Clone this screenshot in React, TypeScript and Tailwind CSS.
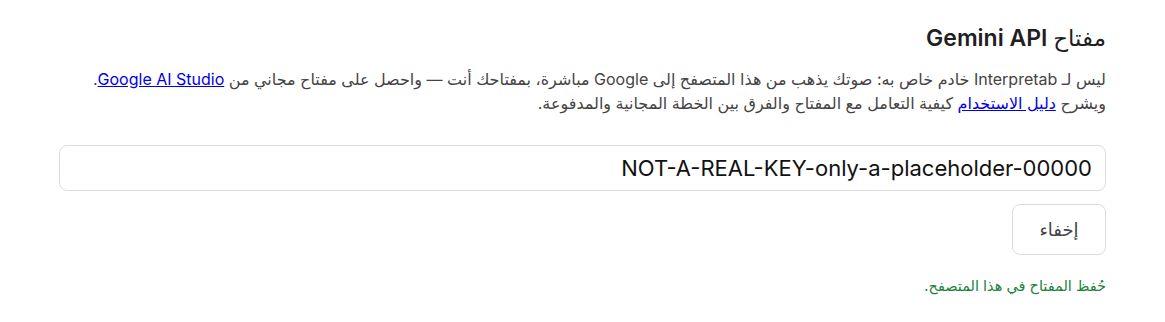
export default function App() {
  return (
    <div
      dir="rtl"
      className="min-h-screen bg-white px-[59px] pt-[24px] font-['Inter','DejaVu_Sans',sans-serif] text-[#222]"
    >
      <h2 className="text-[23px] font-semibold leading-[28px] text-[#1f1f1f]">
        <span className="font-['DejaVu_Sans'] font-normal">مفتاح</span> Gemini API
      </h2>
      <p className="mt-[15px] text-[16px] leading-[24px] text-[#444]">
        ليس لـ Interpretab خادم خاص به: صوتك يذهب من هذا المتصفح إلى Google مباشرة، بمفتاحك أنت — واحصل على مفتاح مجاني من{" "}
        <a href="#" className="text-[#0000ee] underline">Google AI Studio</a>.
        <br />
        ويشرح <a href="#" className="text-[#0000ee] underline">دليل الاستخدام</a> كيفية التعامل مع المفتاح والفرق بين الخطة المجانية والمدفوعة.
      </p>
      <input
        type="text"
        defaultValue="NOT-A-REAL-KEY-only-a-placeholder-00000"
        className="mt-[30px] block h-[46px] w-full rounded-[8px] border border-[#dcdcdc] bg-white px-[13px] text-[22px] text-[#111] outline-none"
      />
      <button className="mt-[13px] block h-[51px] w-[94px] rounded-[8px] border border-[#dcdcdc] bg-white text-[18px] text-[#444]">
        إخفاء
      </button>
      <p className="mt-[21px] text-[14.5px] leading-[20px] text-[#1a7f37]">حُفظ المفتاح في هذا المتصفح.</p>
    </div>
  );
}
